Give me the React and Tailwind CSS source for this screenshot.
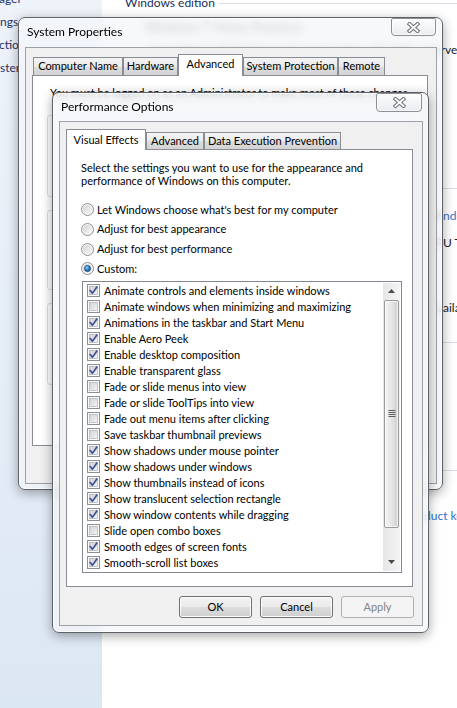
import React, { useId } from 'react';

const effects = [
  ['Animate controls and elements inside windows', true],
  ['Animate windows when minimizing and maximizing', false],
  ['Animations in the taskbar and Start Menu', true],
  ['Enable Aero Peek', true],
  ['Enable desktop composition', true],
  ['Enable transparent glass', true],
  ['Fade or slide menus into view', false],
  ['Fade or slide ToolTips into view', false],
  ['Fade out menu items after clicking', false],
  ['Save taskbar thumbnail previews', false],
  ['Show shadows under mouse pointer', true],
  ['Show shadows under windows', true],
  ['Show thumbnails instead of icons', true],
  ['Show translucent selection rectangle', true],
  ['Show window contents while dragging', true],
  ['Slide open combo boxes', false],
  ['Smooth edges of screen fonts', true],
  ['Smooth-scroll list boxes', true],
];

const radios = [
  ["Let Windows choose what's best for my computer", false],
  ['Adjust for best appearance', false],
  ['Adjust for best performance', false],
  ['Custom:', true],
];

const useSvgId = () => useId().replace(/[^a-zA-Z0-9]/g, '');

const Radio = ({ checked }) => {
  const id = useSvgId();
  return (
    <svg width="13" height="13" viewBox="0 0 13 13" className="shrink-0">
      <defs>
        <linearGradient id={`${id}r`} x1="0" y1="0" x2="1" y2="1">
          <stop offset="0" stopColor="#cfd1d4" />
          <stop offset="1" stopColor="#fbfbfb" />
        </linearGradient>
        <radialGradient id={`${id}b`} cx="0.4" cy="0.35" r="0.7">
          <stop offset="0" stopColor="#9ad6f7" />
          <stop offset="0.55" stopColor="#2a7cc0" />
          <stop offset="1" stopColor="#114577" />
        </radialGradient>
      </defs>
      <circle cx="6.5" cy="6.5" r="6" fill="#f6f6f6" stroke="#8e8f8f" />
      <circle cx="6.5" cy="6.5" r="4.6" fill={`url(#${id}r)`} />
      {checked && (
        <circle cx="6.5" cy="6.5" r="3.1" fill={`url(#${id}b)`} stroke="#1b4a78" strokeWidth="0.7" />
      )}
    </svg>
  );
};

const CheckBox = ({ checked }) => {
  const id = useSvgId();
  return (
    <svg width="13" height="13" viewBox="0 0 13 13" className="shrink-0">
      <defs>
        <linearGradient id={`${id}c`} x1="0" y1="0" x2="1" y2="1">
          <stop offset="0" stopColor="#cdd0d4" />
          <stop offset="1" stopColor="#f7f7f7" />
        </linearGradient>
      </defs>
      <rect x="0.5" y="0.5" width="12" height="12" fill="#fdfdfd" stroke="#8e8f8f" />
      <rect x="2.5" y="2.5" width="8" height="8" fill={`url(#${id}c)`} stroke="#b4b8bd" strokeWidth="0.8" />
      {checked && (
        <path
          d="M3.2 6.4 L5.4 9.3 L9.9 2.9"
          fill="none"
          stroke="#3f5394"
          strokeWidth="1.7"
          strokeLinecap="round"
          strokeLinejoin="round"
        />
      )}
    </svg>
  );
};

const CloseGlyph = () => (
  <svg width="15" height="11" viewBox="0 0 15 11">
    <path d="M3.5 2 L11.5 9 M11.5 2 L3.5 9" stroke="#6d6f73" strokeWidth="3.8" strokeLinecap="square" />
    <path d="M3.5 2 L11.5 9 M11.5 2 L3.5 9" stroke="#ffffff" strokeWidth="1.9" strokeLinecap="square" />
  </svg>
);

const Arrow = ({ down }) => (
  <svg width="7" height="4" viewBox="0 0 7 4">
    <path d={down ? 'M0 0 L7 0 L3.5 4 Z' : 'M0 4 L7 4 L3.5 0 Z'} fill="#4a4a4a" />
  </svg>
);

const Grip = () => (
  <svg width="8" height="8" viewBox="0 0 8 8">
    {[0.5, 2.5, 4.5, 6.5].map((y) => (
      <line key={y} x1="0.5" x2="7.5" y1={y} y2={y} stroke="#5b5b5b" strokeWidth="1" />
    ))}
  </svg>
);

const Tab = ({ label, selected, className }) => (
  <div
    className={`${
      selected
        ? 'relative z-10 -mb-px bg-white'
        : 'bg-[linear-gradient(#f3f3f3,#ebebeb_50%,#dedede_50%,#d3d3d3)]'
    } flex shrink-0 items-center justify-center whitespace-nowrap border border-b-0 border-[#898c95] ${className}`}
  >
    {label}
  </div>
);

const Button = ({ label, disabled }) => (
  <div
    className={`flex h-[22px] w-[73px] items-center justify-center rounded-[3px] border ${
      disabled
        ? 'border-[#adb2b5] bg-[#f4f4f4] text-[#838383]'
        : 'border-[#707070] bg-[linear-gradient(#f2f2f2,#ebebeb_50%,#dddddd_50%,#cfcfcf)] shadow-[inset_0_0_0_1px_#fcfcfc]'
    }`}
  >
    {label}
  </div>
);

const Frame = ({ title, className, barClass, closeClass, clientClass, children }) => (
  <div
    className={`absolute flex flex-col rounded-[7px] border border-[#5e6268] bg-[#f3f5f8]/75 backdrop-blur-[4px] shadow-[inset_0_0_0_1px_rgba(255,255,255,0.7),0_3px_12px_rgba(0,0,0,0.35)] ${className}`}
  >
    <div className={`flex shrink-0 items-start pl-[8px] pr-[6px] ${barClass}`}>
      <span className="pt-[6px] text-[12px] leading-[16px]">{title}</span>
      <div
        className={`ml-auto flex items-center justify-center rounded-b-[4px] rounded-t-[2px] border border-[#8b8f96] bg-gradient-to-b from-white/80 to-[#e6e9ee]/80 shadow-[inset_0_0_0_1px_rgba(255,255,255,0.6)] ${closeClass}`}
      >
        <CloseGlyph />
      </div>
    </div>
    <div
      className={`ml-[6px] mr-[5px] flex flex-1 flex-col border border-[#9da1a8] bg-[#f0f0f0] ${clientClass}`}
    >
      {children}
    </div>
  </div>
);

const Peek = ({ hidden, shown, className, cutClass, shownClass }) => (
  <div className={`flex h-[14px] items-center whitespace-nowrap text-[12px] ${className}`}>
    <div className={`flex shrink-0 justify-end overflow-hidden text-[#333] ${cutClass}`}>
      <span className="shrink-0">{hidden}</span>
    </div>
    <span className={shownClass}>{shown}</span>
  </div>
);

const LeftPane = () => (
  <div className="flex w-[102px] shrink-0 flex-col bg-gradient-to-b from-[#eef3fa] to-[#dce7f4]">
    <div className="-mt-[8px] flex flex-col gap-[9px] text-[12px] leading-[14px] text-[#1f3263]">
      <span className="-ml-px">ager</span>
      <span>ngs</span>
      <span className="-ml-px">ctio</span>
      <span>ster</span>
    </div>
  </div>
);

const RightPane = () => (
  <div className="flex flex-1 flex-col overflow-hidden bg-white">
    <div className="-mt-[4px] flex h-[14px] items-center whitespace-nowrap pl-[23px] text-[12px] text-[#1a2f5a]">
      <span>Windows edition</span>
      <div className="ml-[4px] h-px flex-1 bg-[#d6dde5]" />
    </div>
    <div className="mt-[10px] h-[14px] whitespace-nowrap pl-[43px] text-[13px] leading-[14px] text-[#444]">
      Windows 7 Home Premium
    </div>
    <Peek
      className="mt-[9px]"
      cutClass="w-[343px]"
      hidden="Copyright © 2009 Microsoft Corporation.  All rights reser"
      shown="ved."
      shownClass="text-[#222]"
    />
    <div className="ml-[100px] mt-[131px] h-px shrink-0 bg-[#d6dde5]" />
    <Peek
      className="mt-[20px]"
      cutClass="w-[341px]"
      hidden="Rating:      Wi"
      shown="ndows Experience Index"
      shownClass="text-[#3370cc]"
    />
    <Peek
      className="mt-[13px]"
      cutClass="w-[341px]"
      hidden="Processor:   Intel(R) Core(TM)2 Duo CP"
      shown="U   T6600 @ 2.20GHz"
      shownClass="text-[#24182e]"
    />
    <Peek
      className="mt-[51px]"
      cutClass="w-[341px]"
      hidden="Pen and Touch:   No Pen or Touch Input is av"
      shown="ailable for this Display"
      shownClass="text-[#222]"
    />
    <div className="ml-[100px] mt-[27px] h-px shrink-0 bg-[#d6dde5]" />
    <div className="ml-[100px] mt-[127px] h-px shrink-0 bg-[#d6dde5]" />
    <Peek
      className="mt-[38px]"
      cutClass="w-[322px]"
      hidden="Change pro"
      shown="duct key"
      shownClass="text-[#3370cc]"
    />
  </div>
);

const SystemProperties = () => (
  <Frame
    title="System Properties"
    className="left-[18px] top-[17px] h-[473px] w-[425px]"
    barClass="h-[29px]"
    closeClass="h-[18px] w-[45px]"
    clientClass="mb-[5px]"
  >
    <div className="flex flex-col pl-[6px] pr-[8px] pt-[6px]">
      <div className="flex h-[21px] items-end pl-px">
        <Tab label="Computer Name" className="h-[18px] w-[90px]" />
        <Tab label="Hardware" className="h-[18px] w-[55px]" />
        <Tab label="Advanced" selected className="h-[22px] w-[65px] pb-[3px]" />
        <Tab label="System Protection" className="h-[18px] w-[95px]" />
        <Tab label="Remote" className="h-[18px] w-[47px]" />
      </div>
      <div className="flex h-[371px] flex-col border border-[#898c95] bg-white pt-[10px]">
        <p className="whitespace-nowrap pl-[17px] leading-[14px]">
          You must be logged on as an Administrator to make most of these changes.
        </p>
        <div className="mx-[14px] mt-[15px] h-[82px] rounded-[3px] border border-[#d5dfe5]" />
        <div className="mx-[14px] mt-[13px] h-[80px] rounded-[3px] border border-[#d5dfe5]" />
        <div className="mx-[14px] mt-[13px] h-[82px] rounded-[3px] border border-[#d5dfe5]" />
      </div>
    </div>
  </Frame>
);

const ScrollBar = () => (
  <div className="flex w-[17px] shrink-0 flex-col bg-gradient-to-r from-[#e6e6e6] to-[#f4f4f4]">
    <div className="flex h-[17px] items-center justify-center">
      <Arrow />
    </div>
    <div className="mx-px flex h-[228px] items-center justify-center rounded-[2px] border border-[#9a9a9a] bg-gradient-to-r from-[#f4f4f4] via-[#e6e6e6] to-[#cdcdcd] shadow-[inset_0_0_0_1px_rgba(255,255,255,0.7)]">
      <Grip />
    </div>
    <div className="flex-1" />
    <div className="flex h-[17px] items-center justify-center">
      <Arrow down />
    </div>
  </div>
);

const PerformanceOptions = () => (
  <Frame
    title="Performance Options"
    className="left-[52px] top-[92px] h-[541px] w-[377px]"
    barClass="h-[28px]"
    closeClass="h-[19px] w-[46px]"
    clientClass="mb-[6px]"
  >
    <div className="flex flex-col pl-[6px] pr-[9px] pt-[7px]">
      <div className="flex h-[20px] items-end">
        <Tab label="Visual Effects" selected className="h-[21px] w-[80px]" />
        <Tab label="Advanced" className="h-[17px] w-[58px]" />
        <Tab label="Data Execution Prevention" className="h-[17px] w-[137px]" />
      </div>
      <div className="flex h-[438px] flex-col border border-[#898c95] bg-white pl-[14px] pt-[11px]">
        <p className="whitespace-nowrap leading-[13px]">
          Select the settings you want to use for the appearance and
          <br />
          performance of Windows on this computer.
        </p>
        <div className="mt-[13px] flex flex-col">
          {radios.map(([label, checked]) => (
            <div key={label} className="flex h-[19.7px] items-center gap-[3px] whitespace-nowrap">
              <Radio checked={checked} />
              <span>{label}</span>
            </div>
          ))}
        </div>
        <div className="ml-px mt-[2px] flex h-[292px] w-[320px] border border-[#828790] p-px">
          <div className="flex flex-1 flex-col">
            {effects.map(([label, checked]) => (
              <div key={label} className="flex h-[16px] items-center gap-[4px] whitespace-nowrap pl-[3px]">
                <CheckBox checked={checked} />
                <span>{label}</span>
              </div>
            ))}
          </div>
          <ScrollBar />
        </div>
      </div>
      <div className="-mr-px mt-[9px] flex justify-end gap-[8px]">
        <Button label="OK" />
        <Button label="Cancel" />
        <Button label="Apply" disabled />
      </div>
    </div>
  </Frame>
);

export default function App() {
  return (
    <div className="relative flex h-[708px] w-[457px] overflow-hidden font-['Lato','Liberation_Sans',sans-serif] text-[11px] text-black">
      <LeftPane />
      <RightPane />
      <SystemProperties />
      <PerformanceOptions />
    </div>
  );
}
